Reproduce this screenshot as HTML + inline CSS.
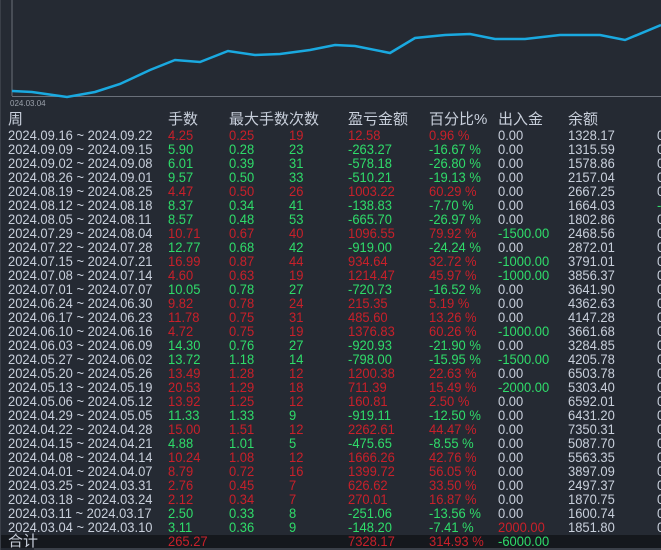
<!DOCTYPE html>
<html><head><meta charset="utf-8"><style>
html,body{margin:0;padding:0;}
body{width:661px;height:550px;background:#252a33;position:relative;overflow:hidden;font-family:"Liberation Sans","Noto Sans CJK SC",sans-serif;font-size:13px;color:#c8cfdb;}
.r{position:absolute;left:0;width:661px;height:14px;line-height:14px;}
.r span{position:absolute;top:0;white-space:nowrap;transform:scaleX(.96);transform-origin:left center;font-size:13.5px}
.a{left:8px}.b{left:168px}.c{left:229px}.d{left:289px}.e{left:348px}.f{left:429px}.g{left:498px}.h{left:568px}.i{left:657px}
.R span.x{color:#c8202a}.G span.x{color:#2fdc6a}
.rd{color:#c8202a!important}.gr{color:#2fdc6a!important}
.hd span{font-size:15px;transform:none}
</style></head><body>
<svg width="661" height="110" style="position:absolute;left:0;top:0">
<line x1="12" y1="0" x2="12" y2="96" stroke="#6a707a" stroke-width="1"/>
<line x1="12" y1="96.5" x2="661" y2="96.5" stroke="#6a707a" stroke-width="1"/>
<line x1="0" y1="0" x2="0" y2="60" stroke="#6a707a"/>
<polyline fill="none" stroke="#1aa9e0" stroke-width="2.5" points="12,91 32,92 67,97 95,92 120,84 150,70 175,60 200,62 228,51 255,55 280,54 310,50 335,45 355,46 390,53 415,38 445,35 470,34 495,39 525,39 560,35 600,35 625,40 661,25"/>
<text x="10" y="106" font-size="8" fill="#9aa0aa" font-family="Liberation Sans">024.03.04</text>
</svg>
<div class="r hd" style="top:113px"><span class="a">周</span><span class="b">手数</span><span class="c">最大手数次数</span><span class="e">盈亏金额</span><span class="f">百分比%</span><span class="g">出入金</span><span class="h">余额</span></div>
<div class="r R" style="top:129px"><span class="a">2024.09.16 ~ 2024.09.22</span><span class="b x">4.25</span><span class="c x">0.25</span><span class="d x">19</span><span class="e x">12.58</span><span class="f x">0.96 %</span><span class="g">0.00</span><span class="h">1328.17</span><span class="i">0</span></div>
<div class="r G" style="top:143px"><span class="a">2024.09.09 ~ 2024.09.15</span><span class="b x">5.90</span><span class="c x">0.28</span><span class="d x">23</span><span class="e x">-263.27</span><span class="f x">-16.67 %</span><span class="g">0.00</span><span class="h">1315.59</span><span class="i">0</span></div>
<div class="r G" style="top:157px"><span class="a">2024.09.02 ~ 2024.09.08</span><span class="b x">6.01</span><span class="c x">0.39</span><span class="d x">31</span><span class="e x">-578.18</span><span class="f x">-26.80 %</span><span class="g">0.00</span><span class="h">1578.86</span><span class="i">0</span></div>
<div class="r G" style="top:171px"><span class="a">2024.08.26 ~ 2024.09.01</span><span class="b x">9.57</span><span class="c x">0.50</span><span class="d x">33</span><span class="e x">-510.21</span><span class="f x">-19.13 %</span><span class="g">0.00</span><span class="h">2157.04</span><span class="i">0</span></div>
<div class="r R" style="top:185px"><span class="a">2024.08.19 ~ 2024.08.25</span><span class="b x">4.47</span><span class="c x">0.50</span><span class="d x">26</span><span class="e x">1003.22</span><span class="f x">60.29 %</span><span class="g">0.00</span><span class="h">2667.25</span><span class="i">0</span></div>
<div class="r G" style="top:199px"><span class="a">2024.08.12 ~ 2024.08.18</span><span class="b x">8.37</span><span class="c x">0.34</span><span class="d x">41</span><span class="e x">-138.83</span><span class="f x">-7.70 %</span><span class="g">0.00</span><span class="h">1664.03</span><span class="i gr">-</span></div>
<div class="r G" style="top:213px"><span class="a">2024.08.05 ~ 2024.08.11</span><span class="b x">8.57</span><span class="c x">0.48</span><span class="d x">53</span><span class="e x">-665.70</span><span class="f x">-26.97 %</span><span class="g">0.00</span><span class="h">1802.86</span><span class="i">0</span></div>
<div class="r R" style="top:227px"><span class="a">2024.07.29 ~ 2024.08.04</span><span class="b x">10.71</span><span class="c x">0.67</span><span class="d x">40</span><span class="e x">1096.55</span><span class="f x">79.92 %</span><span class="g gr">-1500.00</span><span class="h">2468.56</span><span class="i">0</span></div>
<div class="r G" style="top:241px"><span class="a">2024.07.22 ~ 2024.07.28</span><span class="b x">12.77</span><span class="c x">0.68</span><span class="d x">42</span><span class="e x">-919.00</span><span class="f x">-24.24 %</span><span class="g">0.00</span><span class="h">2872.01</span><span class="i">0</span></div>
<div class="r R" style="top:255px"><span class="a">2024.07.15 ~ 2024.07.21</span><span class="b x">16.99</span><span class="c x">0.87</span><span class="d x">44</span><span class="e x">934.64</span><span class="f x">32.72 %</span><span class="g gr">-1000.00</span><span class="h">3791.01</span><span class="i">0</span></div>
<div class="r R" style="top:269px"><span class="a">2024.07.08 ~ 2024.07.14</span><span class="b x">4.60</span><span class="c x">0.63</span><span class="d x">19</span><span class="e x">1214.47</span><span class="f x">45.97 %</span><span class="g gr">-1000.00</span><span class="h">3856.37</span><span class="i">0</span></div>
<div class="r G" style="top:283px"><span class="a">2024.07.01 ~ 2024.07.07</span><span class="b x">10.05</span><span class="c x">0.78</span><span class="d x">27</span><span class="e x">-720.73</span><span class="f x">-16.52 %</span><span class="g">0.00</span><span class="h">3641.90</span><span class="i">0</span></div>
<div class="r R" style="top:297px"><span class="a">2024.06.24 ~ 2024.06.30</span><span class="b x">9.82</span><span class="c x">0.78</span><span class="d x">24</span><span class="e x">215.35</span><span class="f x">5.19 %</span><span class="g">0.00</span><span class="h">4362.63</span><span class="i">0</span></div>
<div class="r R" style="top:311px"><span class="a">2024.06.17 ~ 2024.06.23</span><span class="b x">11.78</span><span class="c x">0.75</span><span class="d x">31</span><span class="e x">485.60</span><span class="f x">13.26 %</span><span class="g">0.00</span><span class="h">4147.28</span><span class="i">0</span></div>
<div class="r R" style="top:325px"><span class="a">2024.06.10 ~ 2024.06.16</span><span class="b x">4.72</span><span class="c x">0.75</span><span class="d x">19</span><span class="e x">1376.83</span><span class="f x">60.26 %</span><span class="g gr">-1000.00</span><span class="h">3661.68</span><span class="i">0</span></div>
<div class="r G" style="top:339px"><span class="a">2024.06.03 ~ 2024.06.09</span><span class="b x">14.30</span><span class="c x">0.76</span><span class="d x">27</span><span class="e x">-920.93</span><span class="f x">-21.90 %</span><span class="g">0.00</span><span class="h">3284.85</span><span class="i">0</span></div>
<div class="r G" style="top:353px"><span class="a">2024.05.27 ~ 2024.06.02</span><span class="b x">13.72</span><span class="c x">1.18</span><span class="d x">14</span><span class="e x">-798.00</span><span class="f x">-15.95 %</span><span class="g gr">-1500.00</span><span class="h">4205.78</span><span class="i">0</span></div>
<div class="r R" style="top:367px"><span class="a">2024.05.20 ~ 2024.05.26</span><span class="b x">13.49</span><span class="c x">1.28</span><span class="d x">12</span><span class="e x">1200.38</span><span class="f x">22.63 %</span><span class="g">0.00</span><span class="h">6503.78</span><span class="i">0</span></div>
<div class="r R" style="top:381px"><span class="a">2024.05.13 ~ 2024.05.19</span><span class="b x">20.53</span><span class="c x">1.29</span><span class="d x">18</span><span class="e x">711.39</span><span class="f x">15.49 %</span><span class="g gr">-2000.00</span><span class="h">5303.40</span><span class="i">0</span></div>
<div class="r R" style="top:395px"><span class="a">2024.05.06 ~ 2024.05.12</span><span class="b x">13.92</span><span class="c x">1.25</span><span class="d x">12</span><span class="e x">160.81</span><span class="f x">2.50 %</span><span class="g">0.00</span><span class="h">6592.01</span><span class="i">0</span></div>
<div class="r G" style="top:409px"><span class="a">2024.04.29 ~ 2024.05.05</span><span class="b x">11.33</span><span class="c x">1.33</span><span class="d x">9</span><span class="e x">-919.11</span><span class="f x">-12.50 %</span><span class="g">0.00</span><span class="h">6431.20</span><span class="i">0</span></div>
<div class="r R" style="top:423px"><span class="a">2024.04.22 ~ 2024.04.28</span><span class="b x">15.00</span><span class="c x">1.51</span><span class="d x">12</span><span class="e x">2262.61</span><span class="f x">44.47 %</span><span class="g">0.00</span><span class="h">7350.31</span><span class="i">0</span></div>
<div class="r G" style="top:437px"><span class="a">2024.04.15 ~ 2024.04.21</span><span class="b x">4.88</span><span class="c x">1.01</span><span class="d x">5</span><span class="e x">-475.65</span><span class="f x">-8.55 %</span><span class="g">0.00</span><span class="h">5087.70</span><span class="i">0</span></div>
<div class="r R" style="top:451px"><span class="a">2024.04.08 ~ 2024.04.14</span><span class="b x">10.24</span><span class="c x">1.08</span><span class="d x">12</span><span class="e x">1666.26</span><span class="f x">42.76 %</span><span class="g">0.00</span><span class="h">5563.35</span><span class="i">0</span></div>
<div class="r R" style="top:465px"><span class="a">2024.04.01 ~ 2024.04.07</span><span class="b x">8.79</span><span class="c x">0.72</span><span class="d x">16</span><span class="e x">1399.72</span><span class="f x">56.05 %</span><span class="g">0.00</span><span class="h">3897.09</span><span class="i">0</span></div>
<div class="r R" style="top:479px"><span class="a">2024.03.25 ~ 2024.03.31</span><span class="b x">2.76</span><span class="c x">0.45</span><span class="d x">7</span><span class="e x">626.62</span><span class="f x">33.50 %</span><span class="g">0.00</span><span class="h">2497.37</span><span class="i">0</span></div>
<div class="r R" style="top:493px"><span class="a">2024.03.18 ~ 2024.03.24</span><span class="b x">2.12</span><span class="c x">0.34</span><span class="d x">7</span><span class="e x">270.01</span><span class="f x">16.87 %</span><span class="g">0.00</span><span class="h">1870.75</span><span class="i">0</span></div>
<div class="r G" style="top:507px"><span class="a">2024.03.11 ~ 2024.03.17</span><span class="b x">2.50</span><span class="c x">0.33</span><span class="d x">8</span><span class="e x">-251.06</span><span class="f x">-13.56 %</span><span class="g">0.00</span><span class="h">1600.74</span><span class="i">0</span></div>
<div class="r G" style="top:521px"><span class="a">2024.03.04 ~ 2024.03.10</span><span class="b x">3.11</span><span class="c x">0.36</span><span class="d x">9</span><span class="e x">-148.20</span><span class="f x">-7.41 %</span><span class="g rd">2000.00</span><span class="h">1851.80</span><span class="i">0</span></div>
<div style="position:absolute;left:0;top:535px;width:661px;height:13px;background:#15181d"></div>
<div style="position:absolute;left:34px;top:548px;width:627px;height:2px;background:#3a3f48"></div>
<div class="r" style="top:535px"><span class="a" style="font-size:15px;transform:none">合计</span><span class="b rd">265.27</span><span class="e rd">7328.17</span><span class="f rd">314.93 %</span><span class="g gr">-6000.00</span></div>
<div style="position:absolute;left:0;top:0;width:1px;height:550px;background:#3a3f48"></div>
</body></html>
